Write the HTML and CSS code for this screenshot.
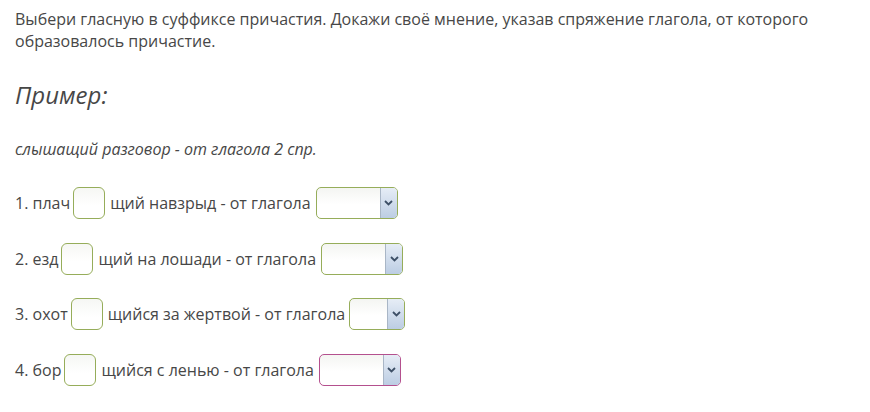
FILE: index.html
```html
<!DOCTYPE html>
<html lang="ru">
<head>
<meta charset="utf-8">
<link rel="stylesheet" href="styles.css">
</head>
<body>
<div class="page">
  <p class="task">Выбери гласную в суффиксе причастия. Докажи своё мнение, указав спряжение глагола, от которого образовалось причастие.</p>
  <h2 class="example-title">Пример:</h2>
  <p class="example">слышащий разговор - от глагола 2 спр.</p>
  <div class="rows">
    <div class="row">1. плач<span class="box"></span>щий навзрыд - от глагола<span class="select"><span class="arrow"><svg width="9" height="6" viewBox="0 0 9 6"><path d="M1 1 L4.5 4.5 L8 1" fill="none" stroke="#3d4f66" stroke-width="1.8"/></svg></span></span></div>
    <div class="row">2. езд<span class="box"></span>щий на лошади - от глагола<span class="select"><span class="arrow"><svg width="9" height="6" viewBox="0 0 9 6"><path d="M1 1 L4.5 4.5 L8 1" fill="none" stroke="#3d4f66" stroke-width="1.8"/></svg></span></span></div>
    <div class="row">3. охот<span class="box"></span>щийся за жертвой - от глагола<span class="select narrow"><span class="arrow"><svg width="9" height="6" viewBox="0 0 9 6"><path d="M1 1 L4.5 4.5 L8 1" fill="none" stroke="#3d4f66" stroke-width="1.8"/></svg></span></span></div>
    <div class="row">4. бор<span class="box"></span>щийся с ленью - от глагола<span class="select pink"><span class="arrow"><svg width="9" height="6" viewBox="0 0 9 6"><path d="M1 1 L4.5 4.5 L8 1" fill="none" stroke="#3d4f66" stroke-width="1.8"/></svg></span></span></div>
  </div>
</div>
</body>
</html>
```

FILE: styles.css
```css
html, body {
  margin: 0;
  padding: 0;
  background: #ffffff;
}
.page {
  padding: 8px 15px 0 15px;
  font-family: "Open Sans", "Liberation Sans", sans-serif;
  font-size: 16px;
  line-height: 22px;
  color: #474747;
}
.task {
  margin: 0;
  width: 820px;
}
.example-title {
  margin: 27px 0 0 0;
  font-size: 24px;
  line-height: 32px;
  font-style: italic;
  font-weight: normal;
}
.example {
  margin: 27px 0 0 0;
  font-size: 16px;
  font-style: italic;
}
.rows {
  margin-top: 27px;
  display: flex;
  flex-direction: column;
  gap: 23.5px;
}
.row {
  display: flex;
  align-items: center;
  height: 32px;
  white-space: pre;
}
.box {
  display: inline-block;
  width: 30px;
  height: 30px;
  margin: 0 5px 0 3px;
  border: 1px solid #96ad5a;
  border-radius: 6px;
  background: linear-gradient(#f6f7f4, #ffffff 60%);
}
.select {
  display: inline-flex;
  justify-content: flex-end;
  width: 80px;
  height: 30px;
  margin-left: 5px;
  border: 1px solid #96ad5a;
  border-radius: 5px;
  background: linear-gradient(#f4f5f2, #ffffff 55%);
  overflow: hidden;
}
.select.narrow {
  width: 54px;
  margin-left: 4px;
}
.select.pink {
  border-color: #b4508e;
}
.arrow {
  width: 16px;
  height: 30px;
  border-left: 1px solid #a9b6c6;
  background: linear-gradient(#e6edf6, #bccde3);
  display: flex;
  align-items: center;
  justify-content: center;
}
```
